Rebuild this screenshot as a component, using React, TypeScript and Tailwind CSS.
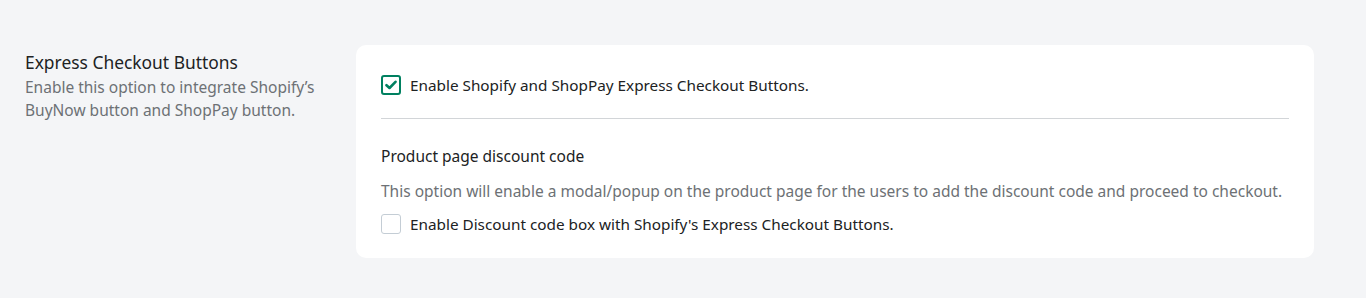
import React from "react";

export default function App() {
  return (
    <div className="min-h-[298px] w-full bg-[#f4f5f7] pt-[45px] pl-[25px] pr-[52px] pb-[40px]" style={{ fontFamily: '"Noto Sans", "Open Sans", sans-serif' }}>
      <div className="flex">
        <div className="w-[331px] shrink-0 pt-[5px]">
          <h2 className="text-[17.4px] leading-[24px] text-[#202223]">Express Checkout Buttons</h2>
          <p className="mt-[2px] text-[15.5px] leading-[23px] text-[#6d7175] w-[300px]">
            Enable this option to integrate Shopify’s BuyNow button and ShopPay button.
          </p>
        </div>
        <div className="flex-1 rounded-[10px] bg-white px-[25px] pt-[30px] pb-[24px]">
          <label className="flex items-center gap-[9px]">
            <span className="flex h-[20px] w-[20px] items-center justify-center rounded-[3px] border-2 border-[#008060] bg-white">
              <svg width="12" height="10" viewBox="0 0 12 10" fill="none">
                <path d="M1.5 5.2 L4.5 8 L10.5 1.8" stroke="#008060" strokeWidth="2.6" strokeLinecap="round" strokeLinejoin="round" />
              </svg>
            </span>
            <span className="text-[15.3px] leading-[20px] text-[#202223]">Enable Shopify and ShopPay Express Checkout Buttons.</span>
          </label>
          <div className="mt-[23px] border-t border-[#d2d5d8]" />
          <h3 className="mt-[26px] text-[15.5px] leading-[22px] text-[#202223]">Product page discount code</h3>
          <p className="mt-[13px] text-[15.5px] leading-[22px] text-[#6d7175]">
            This option will enable a modal/popup on the product page for the users to add the discount code and proceed to checkout.
          </p>
          <label className="mt-[12px] flex items-center gap-[9px]">
            <span className="h-[20px] w-[20px] rounded-[3px] border-[1.5px] border-[#c4cdd5] bg-white" />
            <span className="text-[15.3px] leading-[20px] text-[#202223]">Enable Discount code box with Shopify's Express Checkout Buttons.</span>
          </label>
        </div>
      </div>
    </div>
  );
}
